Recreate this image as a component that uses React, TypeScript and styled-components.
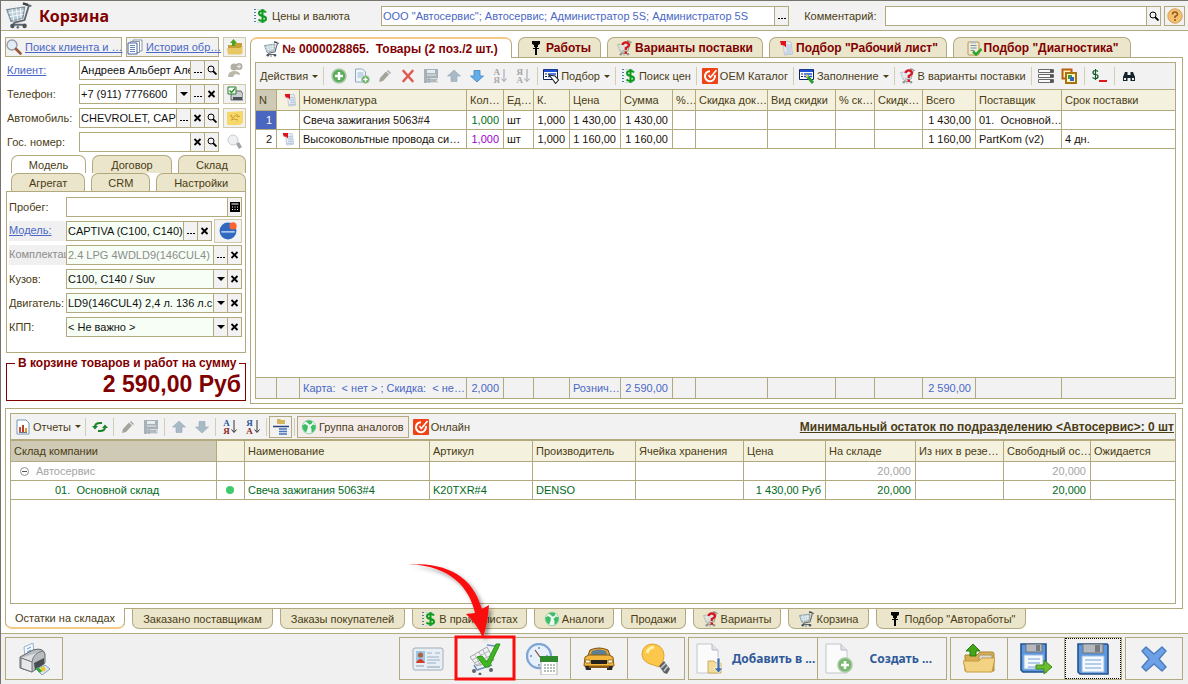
import React from 'react';
import styled, { createGlobalStyle, css } from 'styled-components';

const C = {
  line: '#b3a97f', panel: '#f2f2f2', head: '#f4f1de', headSel: '#cfcab6', tab: '#ebe5cb',
  text: '#4a3c14', link: '#4b68c4', maroon: '#800000', green: '#006a1b', blue: '#2e5a9a',
};

const Global = createGlobalStyle`
  * { box-sizing: border-box; }
  body { margin: 0; background: #fff; }
  body, button, input, select { font-family: "Liberation Sans", Arial, sans-serif; font-size: 11px; color: ${C.text}; }
  button { border: 0; padding: 0; background: none; }
  svg { display: block; flex: none; }
`;

/* ---------- icons ---------- */
const cartShape = (
  <>
    <path d="M.5 4.500l10.500-1.500-1 6.500-7 2z" fill="#b9ccd6" stroke="#7d909c" strokeWidth=".8" />
    <path d="M1.500 6.500l9-1.300M2.200 8.700l8-1.500M3.500 4.200l1.200 7M6 3.800l1 6.700M8.500 3.500l.5 6.300" stroke="#f4f8fa" strokeWidth=".6" fill="none" />
    <path d="M10.500 1l4.500 1.500M13.500 2.200l-2.500 8.500-6 1.500-1 1.300h8" stroke="#5f6870" strokeWidth="1.100" fill="none" />
    <path d="M10 .8l3 .9" stroke="#3c4247" strokeWidth="1.400" />
    <circle cx="3.800" cy="14.200" r="1.300" fill="#4d555c" /><circle cx="11" cy="14.200" r="1.300" fill="#4d555c" /><circle cx="7" cy="15" r=".8" fill="#6b747b" />
  </>
);
const globe = (
  <>
    <circle cx="8" cy="8" r="6.800" fill="#eef8f1" stroke="#7fcb98" strokeWidth=".8" />
    <path d="M4.500 2.500Q8 .5 11.500 2.500L10.500 5 8 5.500 7 4zM1.300 6.500L4 5l3 2-.5 3L5 13.500Q1.500 11.500 1.300 6.500zM14.700 6.500L12 5.500 9.500 8l1 2 0 4Q14.500 12 14.700 6.500z" fill="#3dbb66" />
  </>
);
const dollar = (
  <>
    <path d="M2 1v14" stroke="#4b7fa8" strokeWidth="2" strokeDasharray="1 2" /><path d="M4 1.500h8M4 14.500h8" stroke="#cad8e0" />
    <path d="M13 4.500Q12 3 9.500 3 6 3 6 5.300 6 7.400 9.500 8T13 10.700Q13 13 9.500 13 7 13 5.500 11.500M9.500 1v14" stroke="#0b9a1c" strokeWidth="2" fill="none" />
  </>
);
const plusBall = <><circle cx="8" cy="8" r="7" fill="#58ad58" stroke="#b0c7ae" strokeWidth="1.500" /><path d="M8 4v8M4 8h8" stroke="#fff" strokeWidth="2.400" /></>;
const note = (
  <><path d="M5 1.500l8 .5 1.500 12-8 1z" fill="#e9eef6" stroke="#a7b7cf" strokeWidth=".7" /><path d="M8 5h4.500M8 7h5M8.200 9h5M8.400 11h5M7 13h6.500" stroke="#9fb2cc" strokeWidth=".8" /><path d="M2 1h6v6.500L6 5.500 3 5z" fill="#e0121b" /></>
);
const magnifier = <><circle cx="6" cy="6" r="5" fill="#e1edf7" stroke="#9a9da3" strokeWidth="1.400" /><path d="M10 10L14.500 14.500" stroke="#9a5a38" strokeWidth="2.600" strokeLinecap="round" /></>;
const folderUp = (
  <><path d="M1 6h5l1-2h8v11H1z" fill="#c79f37" /><path d="M0 9h13l2.500-2v7l-2 1.500H1z" fill="#e8c765" /><path d="M5 7V4H3l3.500-4L10 4H8v3z" fill="#49a51c" /></>
);
const listIcon = <><path d="M.5 1.500h14v10H.500z" fill="#fff" stroke="#11225c" /><path d="M1 1.500h13v2.500H1z" fill="#2151d1" /><path d="M2 5.500h2v1H2zM2 8h2v1H2z" fill="#11225c" /><path d="M5 6h8M5 8.500h8" stroke="#2151d1" strokeWidth="1.400" /></>;

const icons: Record<string, React.ReactNode> = {
  cart: cartShape,
  globe, dollar, plus: plusBall, note, magnifier, folderUp,
  cartAsk: <><g opacity=".55">{cartShape}</g><path d="M5.500 5Q6 2.300 8.800 2.300T12 5Q12 6.500 8.800 8V10" stroke="#d8131b" strokeWidth="2.200" fill="none" /><path d="M7.600 11.500h2.400v2.300H7.600z" fill="#d8131b" /></>,
  piston: <path d="M4 1h8v3l-2 1v2H9v8H7V7H6V5L4 4zM5 8h6v1H5z" fill="#050505" />,
  clip: <><rect x="2" y="2" width="11" height="13" rx="1" fill="#f3ecd2" stroke="#b0954e" /><path d="M4.500 5.500h6M4.500 8h6M4.500 10.500h4" stroke="#6f95bd" /><rect x="5" y="1" width="5" height="2.500" fill="#b8bec4" /><path d="M7 11.500l3 3L15.500 9" stroke="#2fa52d" strokeWidth="2.500" fill="none" /></>,
  copyPlus: <><path d="M1.500 1h7l3 3v10h-10z" fill="#f0f5fb" stroke="#8fa9c2" /><path d="M3.500 5h6M3.500 7h6M3.500 9h4" stroke="#9bb6d0" /><circle cx="11.500" cy="11.500" r="3.800" fill="#5aac58" stroke="#aac6a7" /><path d="M11.500 9.300v4.400M9.300 11.500h4.400" stroke="#fff" strokeWidth="1.500" /></>,
  pencil: <path d="M2 14l1-4 6-6.500 3 3L6 13zM10 3l1-1 3 3-1 1z" fill="#a3a59b" />,
  cross: <path d="M3.500 3l9 10M12.500 3l-9 10" stroke="#e05b50" strokeWidth="2.600" strokeLinecap="round" />,
  save: <><path d="M1 1h14v14H1z" fill="#a7b2b8" /><path d="M4 2h8v3H4z" fill="#e9ecee" /><path d="M4 7h9" stroke="#e9ecee" /><path d="M4 10h11v5H4z" fill="#d8dcde" /><path d="M5 11h2v3H5zM9 11v3M11 11v3M13.500 11l-1.500 1.500 1.500 1.500" stroke="#8d999f" fill="none" /></>,
  up: <path d="M8 2l6.500 6H11v5.500H5V8H1.500z" fill="#a7bac6" stroke="#93a7b4" strokeWidth=".6" />,
  down: <path d="M8 14L1.500 8H5V2.500h6V8h3.500z" fill="#62aee8" stroke="#3f82ba" strokeWidth=".8" />,
  downOff: <path d="M8 14L1.500 8H5V2.500h6V8h3.500z" fill="#a7bac6" stroke="#93a7b4" strokeWidth=".6" />,
  select: <>{listIcon}<path d="M6 7l6 1 3.500 4-3 3.500-2-3z" fill="#fff" stroke="#222" strokeWidth="1.100" /></>,
  fill: <>{listIcon}<path d="M8 8l6 7" stroke="#2c9c2f" strokeWidth="3" /><path d="M7 7l2 2" stroke="#e8cf68" strokeWidth="2" /></>,
  orange: <><rect x="0" y="0" width="16" height="16" rx="1" fill="#ef4216" /><path d="M12.800 7A5 5 0 1 1 8 3.200" fill="none" stroke="#fff" strokeWidth="2" /><path d="M6.500 7l1.800 2.500L14.500 2" fill="none" stroke="#fff" strokeWidth="1.600" /></>,
  rows: <><path d="M.5 1.500h15v3H.500zM.5 6.500h15v3H.500zM.5 11.500h15v3H.500z" fill="#fafafa" stroke="#686868" /><path d="M12 2h3v2h-3zM12 7h3v2h-3zM12 12h3v2h-3z" fill="#555" /></>,
  windows: <><path d="M1.500 1.500h9v9h-9z" fill="#fff1b8" stroke="#b95f10" strokeWidth="2" /><path d="M5 5h10v10H5z" fill="#fff5c0" stroke="#a8720e" strokeWidth="2" /><path d="M7 7h4v4H7z" fill="#3a9a42" /><path d="M9 9h4v4H9z" fill="#2c68c9" /></>,
  dollarRed: <><path d="M7 3.500Q6 2.500 4.500 2.500 2 2.500 2 4.500T4.500 6.500 7 8.500 4.500 10.500 1.500 9.500M4.500 1v11" stroke="#155a2a" strokeWidth="1.200" fill="none" /><path d="M8 12h8v2H8z" fill="#e31515" /></>,
  binoc: <><path d="M4 4h2.500v9H2V9zM9.500 4H12l2 5v4H9.500zM6 7h4v3H6z" fill="#15232b" /><path d="M3 10h2v2H3zM11 10h2v2h-2z" fill="#e8f0f2" /></>,
  chart: <><path d="M2 1h9l3 3v11H2z" fill="#fff" stroke="#7596b8" /><path d="M4 13V8h2v5z" fill="#d94831" /><path d="M7 13V6h2v7z" fill="#b3432e" /><path d="M10 13V9h2v4z" fill="#e29b2b" /><path d="M4 13.500h8" stroke="#777" /></>,
  refresh: <><path d="M3 8Q3 4 8 4h2M13 8q0 4-5 4H6" stroke="#1d842a" strokeWidth="2" fill="none" /><path d="M0 7h6L3 10.500zM10 9h6l-3-3.500z" fill="#1d842a" /></>,
  levels: <><path d="M4 0h3l1 1h4v4H4z" fill="#d3b65e" /><path d="M0 7.500h16" stroke="#28447e" strokeWidth="1.500" /><path d="M6 10h8M6 12.500h8M6 15h8" stroke="#4675b6" strokeWidth="1.700" /></>,
  history: <><path d="M6 1h9v11H6z" fill="#fff" stroke="#8b96a8" /><path d="M3.500 2.500h9v11h-9z" fill="#fff" stroke="#8b96a8" /><path d="M1 4h9v11H1z" fill="#fff" stroke="#4363a2" /><path d="M3 6.500h5M3 8.500h5M3 10.500h5M3 12.500h5" stroke="#6685bd" /></>,
  personOff: <><circle cx="7" cy="5" r="3.500" fill="#b3afa2" /><path d="M1 15q0-6 6-6t6 4l-5-1-2 3z" fill="#bcb8aa" /><circle cx="12" cy="4.500" r="3.500" fill="#b3afa2" /><path d="M12 2.500v4M10 4.500h4" stroke="#eee" /></>,
  fax: <><path d="M6 5h8l2 3v6H4V9z" fill="#c9ced3" stroke="#666" /><path d="M6 11h9v3H6z" fill="#4c5258" /><path d="M1 1h8v7H1z" fill="#fff" stroke="#287b26" /><path d="M2.500 4.500l2 2L8 2.500" stroke="#269a25" strokeWidth="1.500" fill="none" /></>,
  sticker: <><path d="M0 2l16-1v12l-3 2H0z" fill="#f6d868" /><path d="M3 6q2-2 2 1t3-1 2 1l3-1M4 10l3-1 4 1" stroke="#cf9936" fill="none" /></>,
  bulbOff: <><circle cx="6" cy="6" r="5" fill="#eef0f2" stroke="#ccc" /><path d="M9 10l3-2 3 5-3 2z" fill="#9ea5ad" /></>,
  logo: <><circle cx="8" cy="8" r="7.500" fill="#3069c0" /><path d="M2 8h12v1.500H2z" fill="#a9c4ee" /><circle cx="12.500" cy="3.500" r="3.200" fill="#ff6330" /></>,
  help: <><circle cx="8" cy="8" r="7.200" fill="#f7c06e" stroke="#d3a052" /><path d="M5.500 6.500Q5.500 4 8 4t2.500 2.200Q10.500 7.500 8 8.500V10" stroke="#8e5d26" strokeWidth="1.600" fill="none" /><circle cx="8" cy="12" r="1" fill="#8e5d26" /></>,
  printer: <>
    <path d="M6 4l9-4 1 10-9 4z" fill="#f4f9fe" stroke="#9cb1c4" /><path d="M9 6l4-2M9 9l4-2" stroke="#5a9ee0" />
    <path d="M2 14L15 7q10-3 12 4v9l-13 9L2 25z" fill="#b9bcc0" stroke="#62666b" /><path d="M3 15l11 4q1-9 11-11" fill="#dfe1e3" stroke="#75797e" /><path d="M3 15l11 4v10L3 25z" fill="#e6e8ea" stroke="#75797e" />
    <path d="M16 20l10-5v6l-9 6z" fill="#484c51" /><path d="M18 26l9-4 5 4-8 6z" fill="#dce9f8" stroke="#809ec0" /><circle cx="25" cy="26" r="2.500" fill="#edc928" /><path d="M19 25l4 4" stroke="#34a83b" strokeWidth="3" />
  </>,
  idCard: <>
    <rect x="1" y="5" width="30" height="22" rx="2" fill="#e7eef4" stroke="#a2adb8" /><rect x="4" y="8" width="9" height="12" fill="#9cc5e8" /><circle cx="8.500" cy="12" r="2.600" fill="#a9643d" /><path d="M4 20q4-8 9 0z" fill="#d43c24" />
    <path d="M15 10h5M23 10h5M15 14h12M15 17h13M15 20h9" stroke="#98b0c7" /><path d="M4 23h8M15 24h13" stroke="#bac7d2" strokeWidth="2" />
  </>,
  cartOk: <>
    <path d="M1 14l17-10 7 13-17 6z" fill="#f0f1f2" stroke="#a2a8ad" /><path d="M3 17l17-9M5 20l18-8M7 22l17-7M6 12l6 11M10 9l6 12M14 7l6 12" stroke="#b0b6ba" />
    <path d="M18 2l8 1 3 3M5 22l3 5 15-5" stroke="#6a8fc0" strokeWidth="1.500" fill="none" /><circle cx="5" cy="28" r="2" fill="#5e6368" /><circle cx="11" cy="31" r="1.500" fill="#5e6368" /><circle cx="22" cy="27" r="2" fill="#5e6368" />
    <path d="M8 14l5-1 5 6L27 1h4L20 24h-4z" fill="#3db81e" stroke="#2a9414" />
  </>,
  clock: <>
    <circle cx="13" cy="13" r="12" fill="#e8f1fb" stroke="#7fa5d8" strokeWidth="2.400" /><path d="M13 4v2M4 13h2M13 21v2M20 13h2" stroke="#6a8eb7" strokeWidth="1.500" /><path d="M9 7l5 7h6" stroke="#7a4a3a" strokeWidth="1.200" fill="none" />
    <path d="M15 15h16v17H15z" fill="#fff" stroke="#b0b0b0" /><path d="M14 13h18v6H14z" fill="#2e8a2c" /><path d="M18 22h11M18 25h11M18 28h11" stroke="#9aaaa0" strokeWidth="1.500" strokeDasharray="2 1" />
  </>,
  car: <>
    <path d="M7 7q9-4 18 0l3 8H4z" fill="#e7a52d" stroke="#77501a" /><path d="M9 8q7-3 14 0l2 6H7z" fill="#5f8093" /><path d="M2 14l4-2h20l4 2 1 9H1z" fill="#f3b73a" stroke="#8b5d17" />
    <path d="M8 17h16v4H8z" fill="#24221e" /><path d="M2 17h5v3H3zM25 17h5l-1 3h-4z" fill="#fff8d2" stroke="#825a20" strokeWidth=".7" /><path d="M2 23h6v4H3zM24 23h6l-1 4h-5z" fill="#282825" /><path d="M6 24h20" stroke="#86551a" strokeWidth="2" />
  </>,
  bulb: <>
    <path d="M2 11Q3 1 13 1q10 1 11 11 0 5-2 8l-3 4q-5-2-9-3Q2 18 2 11z" fill="#fcc74a" stroke="#dea332" /><path d="M7 10q1-5 7-6" stroke="#fff2ad" strokeWidth="3" fill="none" />
    <path d="M19 23l5-5 6 8-3 5-3-1z" fill="#5f6367" /><path d="M21 25l5-5M24 28l4-5" stroke="#c7cbd0" strokeWidth="1.500" />
  </>,
  docFolder: <><path d="M2 1h15l6 6v23H2z" fill="#fbfbfc" stroke="#c2c6cc" /><path d="M17 1v6h6" fill="#e1e5ea" stroke="#b2b9c3" /><path d="M13 18h6l2 2h5v10H13z" fill="#f3dc9c" stroke="#d0ac5c" /><path d="M22 15h3v10h3l-4.500 5-4.500-5h3z" fill="#426faa" stroke="#fff" strokeWidth=".7" /></>,
  docPlus: <><path d="M2 1h15l6 6v23H2z" fill="#fbfbfc" stroke="#c2c6cc" /><path d="M17 1v6h6" fill="#e1e5ea" stroke="#b2b9c3" /><circle cx="21" cy="22" r="7" fill="#75b96f" stroke="#a8c7a5" strokeWidth="1.500" /><path d="M21 18v8M17 22h8" stroke="#fff" strokeWidth="2.600" /></>,
  folderBig: <><path d="M2 12h12l3-3h12q2 0 2 2v17H2z" fill="#d9ae50" stroke="#a98638" /><path d="M16 12h13v5H16z" fill="#d8dadb" stroke="#ac9458" /><path d="M0 18h16l3-3h13l-3 14H3z" fill="#f3d284" stroke="#c59c41" /><path d="M7 13V8H3l7-7 7 7h-4v5z" fill="#43a617" stroke="#2c7a12" /></>,
  diskBig: <><path d="M1 1h29l1 1v29H3l-2-2z" fill="#5c96dd" stroke="#25518c" strokeWidth="1.600" /><path d="M6 1h20v9H6z" fill="#b5b8bc" stroke="#71767d" /><path d="M18 2h5v7h-5z" fill="#777b80" /><path d="M5 13h22v16H5z" fill="#f5f9fe" stroke="#9bbbe0" /><path d="M8 17h16M8 21h16M8 25h16" stroke="#9ec0e4" strokeWidth="1.500" /></>,
  diskGo: <><path d="M1 1h25v28H3l-2-2z" fill="#5c96dd" stroke="#25518c" strokeWidth="1.600" /><path d="M6 1h16v8H6z" fill="#b5b8bc" stroke="#71767d" /><path d="M16 2h4v6h-4z" fill="#777b80" /><path d="M4 12h19v14H4z" fill="#f5f9fe" stroke="#9bbbe0" /><path d="M8 16h12M8 20h12M8 24h8" stroke="#9ec0e4" strokeWidth="1.500" /><path d="M16 22h8v-5l8 7-8 7v-5h-8z" fill="#6cbf2c" stroke="#3d8a1c" /></>,
  closeBig: <path d="M4 8l4-4 8 7 8-7 4 4-7 8 7 8-4 4-8-7-8 7-4-4 7-8z" fill="#6da0e4" stroke="#4a7cc0" strokeWidth="1.400" strokeLinejoin="round" />,
};
const Icon = ({ n, s = 16 }: { n: string; s?: number }) => (
  <svg width={s} height={s} viewBox={s === 32 ? '0 0 32 32' : '0 0 16 16'} aria-hidden="true">{icons[n]}</svg>
);

const SortMark = styled.span<{ $off?: boolean }>`
  display: grid; grid-template-columns: 8px 6px; align-items: center; font: 700 9px/8px "Liberation Serif", serif;
  i { font-style: normal; color: ${p => (p.$off ? '#a0a4a8' : '#26549a')}; }
  i + i { grid-row: 2; color: ${p => (p.$off ? '#b0a6a6' : '#8e1d1d')}; }
  svg { grid-row: 1 / 3; grid-column: 2; }
`;
const Sort = ({ a, b, off }: { a: string; b: string; off?: boolean }) => (
  <SortMark $off={off}><i>{a}</i><i>{b}</i><svg width="6" height="14" viewBox="0 0 6 14"><path d="M3 0v12M.5 9.500L3 12.500 5.500 9.500" stroke={off ? '#9aa0a4' : '#333'} fill="none" /></svg></SortMark>
);

const Caret = styled.span`margin-left: 2px; border: 3px solid transparent; border-top-color: currentColor; border-bottom: 0;`;

/* ---------- shell ---------- */
const Page = styled.div`
  min-height: 100vh; display: flex; flex-direction: column; border-top: 1px solid #77736d; border-left: 1px solid #77736d; background: #fff;
`;
const Header = styled.header`
  display: flex; align-items: center; height: 30px; background: ${C.panel}; border-bottom: 1px solid ${C.line}; padding: 0 3px 0 5px;
`;
const Title = styled.h1`margin: 0 0 0 6px; width: 214px; font: 700 16px/24px "Noto Sans", sans-serif; color: ${C.maroon};`;
const Flat = styled.button`display: flex; align-items: center; gap: 3px; width: 128px;`;
const Label = styled.label<{ $off?: boolean }>`
  overflow: hidden; white-space: nowrap; ${p => p.$off && css`background: #f0f0f0; color: #8c8c8c; align-self: stretch; line-height: 19px;`}
`;
const HeadLabel = styled(Label)`margin-left: 15px; width: 81px;`;

const Box = styled.div<{ $mint?: boolean; $grow?: number }>`
  display: flex; height: 20px; min-width: 0; border: 1px solid ${C.line}; background: ${p => (p.$mint ? '#f6fef6' : '#fff')};
  ${p => p.$grow && css`flex: ${p.$grow} 1 0;`}
`;
const textPart = css<{ $c?: string }>`flex: 1; min-width: 0; width: 0; border: 0; padding: 0 0 0 1px; background: none; outline: 0; height: 18px; color: ${p => p.$c || '#111'};`;
const Input = styled.input<{ $c?: string }>`${textPart}`;
const Select = styled.select<{ $c?: string }>`${textPart} appearance: none;`;
const Part = styled.button`
  flex: none; width: 14px; border-left: 1px solid ${C.line}; background: ${C.panel}; color: #000; display: grid; place-items: center;
`;
const partArt: Record<string, React.ReactNode> = {
  dots: <path d="M1 7h2v1H1zM4 7h2v1H4zM7 7h2v1H7z" />,
  x: <path d="M1.500 2l6 6M7.500 2l-6 6" stroke="#000" strokeWidth="1.800" />,
  arrow: <path d="M1 3h8L5 7z" />,
  find: <><circle cx="4" cy="4" r="3" fill="none" stroke="#000" /><path d="M6 6l3.500 3.500" stroke="#000" strokeWidth="1.800" /></>,
  calc: <><path d="M0 0h10v10H0z" /><path d="M1.500 2h7M2 5h1M4.500 5h1M7 5h1M2 7.500h1M4.500 7.500h1M7 7.500h1" stroke="#fff" /></>,
};
const names: Record<string, string> = { dots: 'Выбрать', x: 'Очистить', arrow: 'Список', find: 'Открыть', calc: 'Калькулятор' };
const Parts = ({ list }: { list: string[] }) => (
  <>{list.map(k => <Part key={k} type="button" aria-label={names[k]}><svg width="10" height="10" viewBox="0 0 10 10">{partArt[k]}</svg></Part>)}</>
);
const HelpButton = styled.button`margin-left: 3px; width: 21px; height: 20px; border: 1px solid ${C.line}; display: grid; place-items: center;`;

const Upper = styled.main`display: grid; grid-template-columns: 241px minmax(0, 1fr); gap: 4px; padding: 6px 5px 0 4px;`;
const Side = styled.aside`display: flex; flex-direction: column; padding-bottom: 3px;`;
const TopRow = styled.div`display: grid; grid-template-columns: 117px 93px 23px; gap: 4px; height: 20px;`;
const LinkButton = styled.a`
  display: flex; align-items: center; gap: 3px; padding: 0; border: 1px solid ${C.line}; background: ${C.panel};
  color: ${C.link}; white-space: nowrap;
`;
const SquareButton = styled.button<{ $bare?: boolean }>`
  display: grid; place-items: center; height: 20px; border: 1px solid ${p => (p.$bare ? 'transparent' : '#d0c9ac')}; background: ${p => (p.$bare ? 'none' : C.panel)};
`;
const Rows = styled.div`display: grid; gap: 4px; padding-top: 3px;`;
const Row = styled.div`
  display: grid; grid-template-columns: 72px 140px 23px; align-items: center; padding-left: 2px;
  > button { margin: 0 -4px 0 4px; }
`;
const A = styled.a`color: ${C.link};`;

const SideTabs = styled.div<{ $first?: boolean }>`display: flex; gap: 6px; padding: ${p => (p.$first ? 3 : 0)}px 0 0 6px;`;
const SideTab = styled.button<{ $w: number; $on?: boolean }>`
  flex: ${p => p.$w} 1 0; height: 18px; border: 1px solid ${C.line}; border-bottom: 0; border-radius: 7px 7px 0 0; background: ${p => (p.$on ? '#fff' : C.tab)};
`;
const SidePanel = styled.div`border: 1px solid ${C.line}; margin-left: 1px; padding: 5px 3px 0 2px; height: 162px; display: grid; gap: 4px; align-content: start;`;
const PRow = styled.div<{ $extra?: boolean }>`
  display: grid; grid-template-columns: ${p => (p.$extra ? '57px minmax(0,1fr) 30px' : '57px minmax(0,1fr)')}; align-items: center; height: 20px;
  > button { margin: -2px 0 -2px 2px; height: 24px; }
`;
const Sum = styled.fieldset`
  margin: 4px 0 0 1px; padding: 0 4px 2px; border: 1px solid ${C.maroon}; color: ${C.maroon}; min-width: 0;
  legend { margin-left: 4px; padding: 0 3px; font: 700 12px/13px "Liberation Sans", sans-serif; white-space: nowrap; }
  output { display: block; text-align: right; font: 700 23px/28px "Liberation Sans", sans-serif; white-space: nowrap; }
`;

const Content = styled.section`display: flex; flex-direction: column; min-width: 0;`;
const Tabs = styled.nav<{ $gap?: number }>`display: flex; gap: ${p => p.$gap ?? 6}px; height: 20px;`;
const Tab = styled.button<{ $w: number; $on?: boolean }>`
  width: ${p => p.$w}px; flex: 0 1 auto; display: flex; align-items: center; justify-content: center; gap: 2px; height: 20px; white-space: pre;
  font-weight: 700; font-size: 12px; color: ${C.maroon}; border: 1px solid ${C.line}; border-bottom: 0; border-radius: 7px 7px 0 0; background: ${C.tab};
  ${p => p.$on && css`background: #fff; border-top: 2px solid #f5c987; height: 21px; z-index: 1;`}
`;
const LowTab = styled(Tab)`
  font-weight: 400; font-size: 11px; color: ${C.text}; border: 1px solid ${C.line}; border-top: 0; border-radius: 0 0 7px 7px; 
  ${p => p.$on && css`border-bottom: 2px solid #f5c987; margin-top: -1px;`}
`;
const Panel = styled.div`flex: 1; display: flex; flex-direction: column; border: 1px solid ${C.line}; padding: 4px 6px 4px 4px;`;
const Inner = styled.div`flex: 1; display: flex; flex-direction: column; border: 1px solid ${C.line}; overflow: hidden;`;
const Sep = styled.i`width: 1px; height: 18px; margin: 0 3px; background: #d3cdb1;`;
const Bar = styled.div<{ $tight?: boolean }>`
  display: flex; align-items: center; height: 26px; background: ${C.panel}; padding-left: 2px; white-space: nowrap; flex: none;
  ${p => p.$tight && css`border-bottom: 1px solid ${C.line}; ${Sep} { margin: 0 2px; }`}
`;
const Tool = styled.button<{ $boxed?: boolean; $pink?: boolean }>`
  display: flex; align-items: center; justify-content: center; gap: 2px; min-width: 23px; height: 22px; padding: 0 2px;
  ${p => p.$boxed && css`border: 1px solid ${C.line}; background: ${p.$pink ? '#f5ecec' : C.panel};`}
  ${p => p.$pink && css`padding: 0 4px 0 3px; margin-right: 2px;`}
`;
const MinLink = styled.a`margin-left: auto; padding-right: 1px; font-weight: 700; font-size: 12px; color: ${C.text};`;

const Table = styled.table`flex: 1; width: 100%; table-layout: fixed; border-collapse: separate; border-spacing: 0;`;
const cell = css<{ $c?: string; $bg?: string; $r?: boolean }>`
  padding: 0 4px 0 3px; overflow: hidden; white-space: pre; border-right: 1px solid ${C.line}; border-bottom: 1px solid ${C.line};
  text-align: ${p => (p.$r ? 'right' : 'left')}; color: ${p => p.$c || '#1a1208'}; ${p => p.$bg && css`background: ${p.$bg};`}
  &:last-child { border-right: 0; }
`;
const Th = styled.th<{ $c?: string; $bg?: string; $r?: boolean }>`${cell} height: 22px; padding: 0 0 0 3px; font-weight: 400; color: ${C.text}; background: ${p => p.$bg || C.head}; border-top: 1px solid ${C.line};`;
const Td = styled.td<{ $c?: string; $bg?: string; $r?: boolean; $in?: number }>`${cell} height: 19px; ${p => p.$in && css`padding-left: ${p.$in}px;`}`;
const Foot = styled(Td)`height: 21px; border-top: 1px solid ${C.line}; border-bottom: 0; background: ${C.panel}; color: ${C.link};`;
const Mark = styled.span`display: flex; align-items: center; justify-content: center;`;
const Dot = styled.span`display: block; margin: 0 auto; width: 8px; height: 8px; border-radius: 50%; background: #3fcb6c;`;
const Group = styled.span`display: flex; align-items: center; gap: 7px;`;

const Lower = styled.section`flex: 1; display: flex; flex-direction: column; padding: 4px 5px 0 4px;`;
const Footer = styled.footer`
  margin-top: 4px; border-top: 1px solid ${C.line}; background: #f0f0f0; display: flex; align-items: flex-start; padding: 3px 5px 4px 4px; height: 51px;
`;
const Cluster = styled.div<{ $last?: boolean; $push?: boolean }>`
  display: flex; margin-right: ${p => (p.$last ? 0 : 3)}px; ${p => p.$push && css`margin-left: auto;`}
`;
const Big = styled.button<{ $w?: number; $focus?: boolean }>`
  position: relative; width: ${p => p.$w || 58}px; height: 43px; margin-left: -1px; border: 1px solid ${C.line}; background: #f2f2f2;
  display: flex; align-items: center; justify-content: center; gap: 5px; font: 700 12px/16px "Noto Sans", sans-serif; color: ${C.blue}; white-space: nowrap;
  &:first-child { margin-left: 0; }
  ${p => p.$w && css`justify-content: space-between; padding: 0 6px 0 6px;`}
  ${p => p.$focus && css`outline: 1px dotted #000; outline-offset: -2px;`}
`;
const Wide = styled.span`padding-right: 8px;`;
const Callout = styled.svg`position: absolute; left: -50px; bottom: -3px; z-index: 3; pointer-events: none;`;

/* ---------- data ---------- */
const topW = [21, 23, 167, 37, 30, 36, 51, 52, 23, 72, 68, 39, 48, 53, 86];
const topHead = ['N', '', 'Номенклатура', 'Кол…', 'Ед…', 'К.', 'Цена', 'Сумма', '%…', 'Скидка док…', 'Вид скидки', '% ск…', 'Скидк…', 'Всего', 'Поставщик', 'Срок поставки'];
const topRows = [
  ['1', '', 'Свеча зажигания 5063#4', '1,000', 'шт', '1,000', '1 430,00', '1 430,00', '', '', '', '', '', '1 430,00', '01.  Основной…', ''],
  ['2', 'note', 'Высоковольтные провода си…', '1,000', 'шт', '1,000', '1 160,00', '1 160,00', '', '', '', '', '', '1 160,00', 'PartKom (v2)', '4 дн.'],
];
const topFoot = ['', '', 'Карта:  < нет > ; Скидка:  < не…', '2,000', '', '', 'Рознич…', '2 590,00', '', '', '', '', '', '2 590,00', '', ''];
const rightCols = [0, 3, 5, 6, 7, 13];
const lowW = [206, 28, 185, 103, 103, 108, 82, 90, 88, 87];
const lowHead = ['Склад компании', '', 'Наименование', 'Артикул', 'Производитель', 'Ячейка хранения', 'Цена', 'На складе', 'Из них в резе…', 'Свободный ос…', 'Ожидается'];
const lowRow = ['01.  Основной склад', 'dot', 'Свеча зажигания 5063#4', 'K20TXR#4', 'DENSO', '', '1 430,00 Руб', '20,000', '', '20,000', ''];

const Cols = ({ w }: { w: number[] }) => <colgroup>{w.map((x, i) => <col key={i} width={x} />)}<col /></colgroup>;

export default function App() {
  return (
    <Page>
      <Global />
      <Header>
        <Icon n="cart" s={27} />
        <Title>Корзина</Title>
        <Flat type="button"><Icon n="dollar" />Цены и валюта</Flat>
        <Box $grow={408}><Input aria-label="Организация" $c={C.link} defaultValue={'ООО "Автосервис"; Автосервис; Администратор 5S; Администратор 5S'} /><Parts list={['dots']} /></Box>
        <HeadLabel htmlFor="comment">Комментарий:</HeadLabel>
        <Box $grow={275}><Input id="comment" /><Parts list={['find']} /></Box>
        <HelpButton type="button" aria-label="Справка"><Icon n="help" /></HelpButton>
      </Header>

      <Upper>
        <Side>
          <TopRow>
            <LinkButton href="#search"><Icon n="magnifier" />Поиск клиента и …</LinkButton>
            <LinkButton href="#history"><Icon n="history" />История обр…</LinkButton>
            <SquareButton type="button" aria-label="Открыть папку"><Icon n="folderUp" /></SquareButton>
          </TopRow>
          <Rows>
            <Row><Label htmlFor="client"><A href="#client">Клиент: </A></Label><Box><Input id="client" defaultValue="Андреев Альберт Александрович" /><Parts list={['dots', 'find']} /></Box><SquareButton type="button" $bare aria-label="Новый клиент"><Icon n="personOff" /></SquareButton></Row>
            <Row><Label htmlFor="phone">Телефон:</Label><Box><Input id="phone" defaultValue="+7 (911) 7776600" /><Parts list={['arrow', 'dots', 'x']} /></Box><SquareButton type="button" aria-label="Печать"><Icon n="fax" /></SquareButton></Row>
            <Row><Label htmlFor="auto">Автомобиль:</Label><Box><Input id="auto" defaultValue="CHEVROLET, CAPTIVA" /><Parts list={['dots', 'x', 'find']} /></Box><SquareButton type="button" aria-label="Заметка"><Icon n="sticker" /></SquareButton></Row>
            <Row><Label htmlFor="plate">Гос. номер:</Label><Box><Input id="plate" /><Parts list={['x', 'find']} /></Box><SquareButton type="button" $bare aria-label="Подсказка"><Icon n="bulbOff" /></SquareButton></Row>
          </Rows>
          <SideTabs $first><SideTab $w={75} $on>Модель</SideTab><SideTab $w={80}>Договор</SideTab><SideTab $w={68}>Склад</SideTab></SideTabs>
          <SideTabs><SideTab $w={75}>Агрегат</SideTab><SideTab $w={59}>CRM</SideTab><SideTab $w={91}>Настройки</SideTab></SideTabs>
          <SidePanel>
            <PRow><Label htmlFor="run">Пробег:</Label><Box><Input id="run" /><Parts list={['calc']} /></Box></PRow>
            <PRow $extra><Label htmlFor="model" $off><A href="#model">Модель:</A></Label><Box $mint><Input id="model" defaultValue="CAPTIVA (C100, C140)" /><Parts list={['dots', 'x']} /></Box><SquareButton type="button" aria-label="Каталог"><Icon n="logo" s={18} /></SquareButton></PRow>
            <PRow><Label htmlFor="trim" $off>Комплектация:</Label><Box $mint><Input id="trim" $c="#8c8c8c" defaultValue="2.4 LPG 4WDLD9(146CUL4) 2,4" /><Parts list={['dots', 'x']} /></Box></PRow>
            <PRow><Label htmlFor="body">Кузов:</Label><Box $mint><Select id="body"><option>C100, C140 / Suv</option></Select><Parts list={['arrow', 'x']} /></Box></PRow>
            <PRow><Label htmlFor="engine">Двигатель:</Label><Box $mint><Select id="engine"><option>LD9(146CUL4) 2,4 л. 136 л.с.</option></Select><Parts list={['arrow', 'x']} /></Box></PRow>
            <PRow><Label htmlFor="gear">КПП:</Label><Box $mint><Select id="gear"><option>&lt; Не важно &gt;</option></Select><Parts list={['arrow', 'x']} /></Box></PRow>
          </SidePanel>
          <Sum><legend>В корзине товаров и работ на сумму</legend><output>2 590,00 Руб</output></Sum>
        </Side>

        <Content>
          <Tabs>
            <Tab $w={262} $on><Icon n="cart" />№ 0000028865.  Товары (2 поз./2 шт.)</Tab>
            <Tab $w={83}><Icon n="piston" />Работы</Tab>
            <Tab $w={156}><Icon n="cartAsk" />Варианты поставки</Tab>
            <Tab $w={178}><Icon n="note" />Подбор "Рабочий лист"</Tab>
            <Tab $w={178}><Icon n="clip" />Подбор "Диагностика"</Tab>
          </Tabs>
          <Panel>
            <Inner>
              <Bar>
                <Tool>Действия <Caret /></Tool><Sep />
                <Tool aria-label="Добавить"><Icon n="plus" /></Tool><Tool aria-label="Скопировать"><Icon n="copyPlus" /></Tool><Tool aria-label="Изменить"><Icon n="pencil" /></Tool>
                <Tool aria-label="Удалить"><Icon n="cross" /></Tool><Tool aria-label="Сохранить"><Icon n="save" /></Tool><Tool aria-label="Вверх"><Icon n="up" /></Tool><Tool aria-label="Вниз"><Icon n="down" /></Tool>
                <Tool><Sort a="А" b="Я" off /></Tool><Tool><Sort a="Я" b="А" off /></Tool><Sep />
                <Tool><Icon n="select" />Подбор<Caret /></Tool><Sep />
                <Tool><Icon n="dollar" />Поиск цен</Tool><Sep />
                <Tool><Icon n="orange" />OEM Каталог</Tool><Sep />
                <Tool><Icon n="fill" />Заполнение<Caret /></Tool><Sep />
                <Tool><Icon n="cartAsk" />В варианты поставки</Tool><Sep />
                <Tool aria-label="Строки"><Icon n="rows" /></Tool><Tool aria-label="Окна"><Icon n="windows" /></Tool><Sep />
                <Tool aria-label="Цена"><Icon n="dollarRed" /></Tool><Sep /><Tool aria-label="Найти"><Icon n="binoc" /></Tool>
              </Bar>
              <Table>
                <Cols w={topW} />
                <thead><tr>{topHead.map((t, i) => <Th key={i} $bg={i === 0 ? C.headSel : undefined}>{i === 1 ? <Mark><Icon n="note" s={14} /></Mark> : t}</Th>)}</tr></thead>
                <tbody>
                  {topRows.map((r, k) => (
                    <tr key={k}>{r.map((t, i) => (
                      <Td key={i} $r={rightCols.includes(i)} $bg={k === 0 && i === 0 ? '#4b66c0' : undefined}
                        $c={k === 0 && i === 0 ? '#fff' : i === 3 ? (k ? '#a000d0' : '#00701c') : undefined}>
                        {i === 1 && t ? <Mark><Icon n="note" s={14} /></Mark> : t}
                      </Td>
                    ))}</tr>
                  ))}
                  <tr><td colSpan={16} /></tr>
                </tbody>
                <tfoot><tr>{topFoot.map((t, i) => <Foot key={i} $r={rightCols.includes(i) && i !== 6}>{t}</Foot>)}</tr></tfoot>
              </Table>
            </Inner>
          </Panel>
        </Content>
      </Upper>

      <Lower>
        <Panel>
          <Inner>
            <Bar $tight>
              <Tool><Icon n="chart" />Отчеты<Caret /></Tool><Sep />
              <Tool aria-label="Обновить"><Icon n="refresh" /></Tool><Sep />
              <Tool aria-label="Изменить"><Icon n="pencil" /></Tool><Tool aria-label="Сохранить"><Icon n="save" /></Tool><Sep />
              <Tool aria-label="Вверх"><Icon n="up" /></Tool><Tool aria-label="Вниз"><Icon n="downOff" /></Tool><Sep />
              <Tool><Sort a="А" b="Я" /></Tool><Tool><Sort a="Я" b="А" /></Tool><Sep />
              <Tool $boxed aria-label="По уровням"><Icon n="levels" /></Tool><Sep />
              <Tool $boxed $pink><Icon n="globe" />Группа аналогов</Tool>
              <Tool><Icon n="orange" />Онлайн</Tool>
              <MinLink href="#min">Минимальный остаток по подразделению &lt;Автосервис&gt;: 0 шт</MinLink>
            </Bar>
            <Table>
              <Cols w={lowW} />
              <thead><tr>{lowHead.map((t, i) => <Th key={i} $bg={i === 0 ? C.headSel : undefined}>{t}</Th>)}</tr></thead>
              <tbody>
                <tr>{lowHead.map((_, i) => (
                  <Td key={i} $c="#a5a5a5" $in={i === 0 ? 9 : undefined} $r={i === 7 || i === 9}>
                    {i === 0 ? <Group><svg width="9" height="9" viewBox="0 0 9 9"><circle cx="4.500" cy="4.500" r="4" fill="#fff" stroke="#8f8f8f" /><path d="M2 4.500h5" stroke="#555" /></svg>Автосервис</Group> : i === 7 || i === 9 ? '20,000' : ''}
                  </Td>
                ))}</tr>
                <tr>{lowRow.map((t, i) => <Td key={i} $c={C.green} $in={i === 0 ? 44 : undefined} $r={i === 6 || i === 7 || i === 9}>{t === 'dot' ? <Dot /> : t}</Td>)}</tr>
                <tr><td colSpan={11} /></tr>
              </tbody>
            </Table>
          </Inner>
        </Panel>
        <Tabs $gap={7}>
          <LowTab $w={120} $on>Остатки на складах</LowTab>
          <LowTab $w={141}>Заказано поставщикам</LowTab>
          <LowTab $w={125}>Заказы покупателей</LowTab>
          <LowTab $w={115}><Icon n="dollar" />В прайс-листах</LowTab>
          <LowTab $w={80}><Icon n="globe" />Аналоги</LowTab>
          <LowTab $w={65}>Продажи</LowTab>
          <LowTab $w={88}><Icon n="cartAsk" />Варианты</LowTab>
          <LowTab $w={81}><Icon n="cart" />Корзина</LowTab>
          <LowTab $w={150}><Icon n="piston" />Подбор "Автоработы"</LowTab>
        </Tabs>
      </Lower>

      <Footer>
        <Cluster><Big aria-label="Печать"><Icon n="printer" s={32} /></Big></Cluster>
        <Cluster $push>
          <Big aria-label="Карточка"><Icon n="idCard" s={32} /></Big>
          <Big aria-label="Оформить корзину">
            <Icon n="cartOk" s={32} />
            <Callout width="112" height="122" viewBox="0 0 112 122">
              <defs><filter id="shade" x="-10%" y="-10%" width="130%" height="130%"><feDropShadow dx="3" dy="3" stdDeviation="2" floodOpacity=".4" /></filter></defs>
              <path d="M1 4C40 3 65 15 75 49L82 45Q81 62 76 78 70 64 59 54L68 53C62 28 45 6 1 4z" fill="#f90d0d" filter="url(#shade)" />
              <rect x="49" y="77" width="58" height="42" fill="none" stroke="#f90d0d" strokeWidth="3" />
            </Callout>
          </Big>
          <Big aria-label="Расписание"><Icon n="clock" s={32} /></Big>
          <Big aria-label="Автомобиль"><Icon n="car" s={32} /></Big>
          <Big aria-label="Подсказки"><Icon n="bulb" s={32} /></Big>
        </Cluster>
        <Cluster><Big $w={130}><Icon n="docFolder" s={32} />Добавить в ...</Big><Big $w={130}><Icon n="docPlus" s={32} /><Wide>Создать  ...</Wide></Big></Cluster>
        <Cluster>
          <Big aria-label="Открыть"><Icon n="folderBig" s={32} /></Big>
          <Big aria-label="Сохранить и закрыть"><Icon n="diskGo" s={32} /></Big>
          <Big $focus aria-label="Записать"><Icon n="diskBig" s={32} /></Big>
        </Cluster>
        <Cluster $last><Big aria-label="Закрыть"><Icon n="closeBig" s={32} /></Big></Cluster>
      </Footer>
    </Page>
  );
}
